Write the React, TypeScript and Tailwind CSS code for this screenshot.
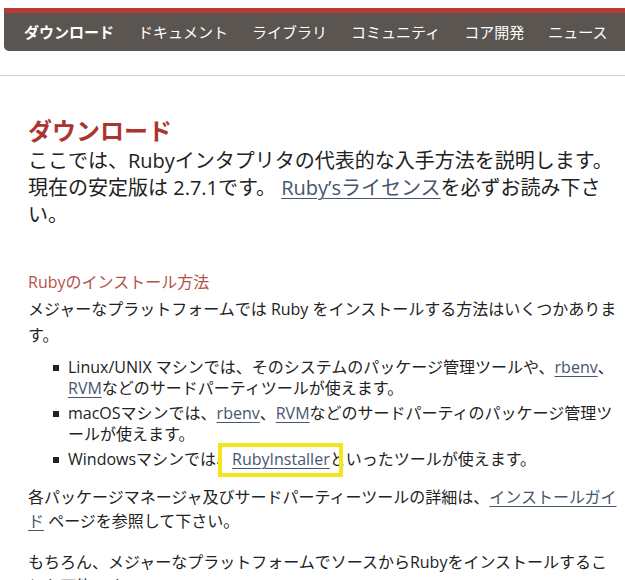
import React from "react";

const font = { fontFamily: '"Open Sans", "Noto Sans CJK JP", sans-serif' };
const cjk = { fontFamily: '"Noto Sans CJK JP", "Noto Sans", sans-serif' };

function A({ children }: { children: React.ReactNode }) {
  return <a className="text-[#465670] underline underline-offset-[3px] decoration-[1px]">{children}</a>;
}

function Bullet() {
  return <span className="absolute left-[-15px] top-[8px] w-[6px] h-[6px] bg-[#222]" />;
}

export default function App() {
  const nav = ["ドキュメント", "ライブラリ", "コミュニティ", "コア開発", "ニュース"];
  return (
    <div className="w-[625px] h-[580px] overflow-hidden bg-white text-[#222]" style={font}>
      <div className="pt-[8px] pl-[4px]">
        <div
          className="border-t-[5px] border-[#bb3a33] bg-[#5a5550] rounded-bl-[5px] h-[43px] flex items-center pl-[20px] gap-[24px] whitespace-nowrap text-white text-[15px]"
          style={cjk}
        >
          <span className="font-bold">ダウンロード</span>
          {nav.map((n) => (
            <span key={n}>{n}</span>
          ))}
        </div>
      </div>
      <div className="mt-[24px] border-t border-[#d0d0d0]" />
      <div className="pl-[28px] pr-[6px]">
        <h1 className="mt-[39px] text-[24px] leading-[30px] font-bold text-[#ac3430]" style={cjk}>ダウンロード</h1>
        <p className="mt-[2px] text-[20px] leading-[27px]">
          ここでは、Rubyインタプリタの代表的な入手方法を説明します。現在の安定版は 2.7.1です。 <A>Ruby’sライセンス</A>を必ずお読み下さい。
        </p>
        <h2 className="mt-[42px] text-[16px] leading-[24px] text-[#b5514a]">Rubyのインストール方法</h2>
        <p className="mt-[2px] text-[16px] leading-[26px]">
          メジャーなプラットフォームでは Ruby をインストールする方法はいくつかあります。
        </p>
        <ul className="mt-[9px] pl-[40px] text-[16px] leading-[21px]">
          <li className="relative mb-[4px]">
            <Bullet />
            Linux/UNIX マシンでは、そのシステムのパッケージ管理ツールや、<A>rbenv</A>、<A>RVM</A>などのサードパーティツールが使えます。
          </li>
          <li className="relative mb-[4px]">
            <Bullet />
            macOSマシンでは、<A>rbenv</A>、<A>RVM</A>などのサードパーティのパッケージ管理ツールが使えます。
          </li>
          <li className="relative">
            <Bullet />
            Windowsマシンでは、
            <span className="relative">
              <A>RubyInstaller</A>
              <span className="absolute left-[-14px] right-[-13px] top-[-5px] bottom-[-7px] border-[4px] border-[#f4e61c]" />
            </span>
            といったツールが使えます。
          </li>
        </ul>
        <p className="mt-[15px] text-[16px] leading-[24px]">
          各パッケージマネージャ及びサードパーティーツールの詳細は、<A>インストールガイド</A> ページを参照して下さい。
        </p>
        <p className="mt-[17px] text-[16px] leading-[24px]">
          もちろん、メジャーなプラットフォームでソースからRubyをインストールすることも可能です。
        </p>
      </div>
    </div>
  );
}
